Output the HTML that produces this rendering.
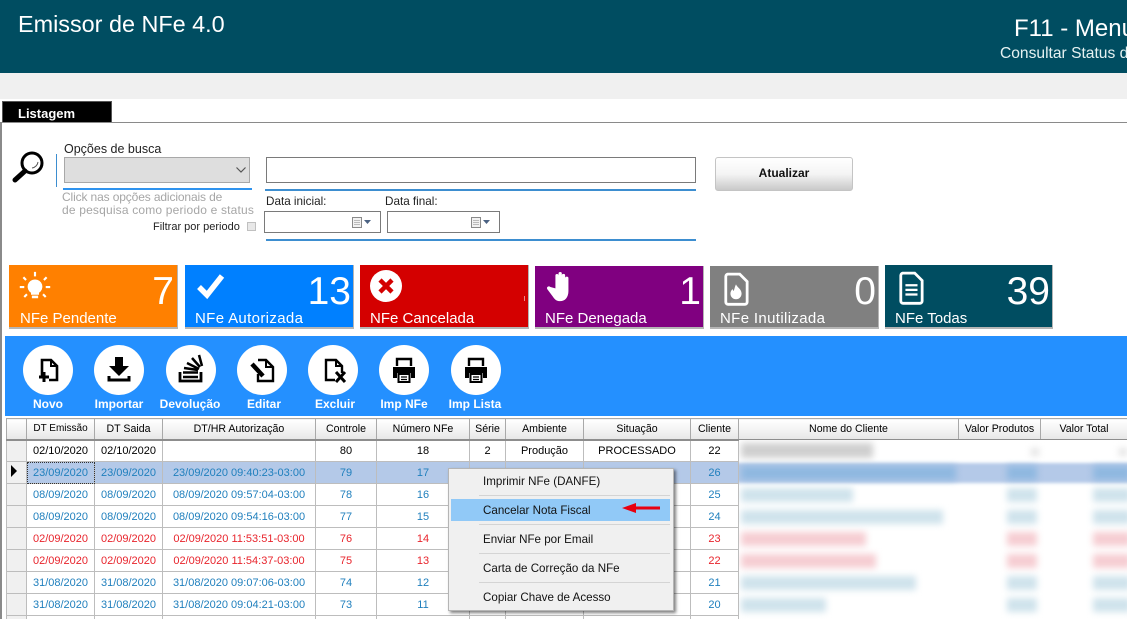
<!DOCTYPE html>
<html lang="pt"><head><meta charset="utf-8"><title>Emissor de NFe 4.0</title>
<style>
*{box-sizing:border-box}
html,body{margin:0;padding:0;background:#fff;width:1127px;height:619px;overflow:hidden}
#p{width:1127px;height:619px;overflow:hidden;position:relative;font-family:"Liberation Sans",sans-serif;color:#000;background:#fff}
.a{position:absolute;white-space:nowrap}
.t{position:absolute;white-space:nowrap;line-height:1}
.card{position:absolute;top:265px;width:169px;height:64px;color:#fff;border-bottom:2px solid #b5b5b5;border-right:1px solid #b5b5b5}
.card .n{position:absolute;right:2px;top:5px;font-size:39px;line-height:44px}
.card .l{position:absolute;left:10px;top:45px;font-size:15px;line-height:18px}
.card svg{position:absolute;left:8px;top:5px}
.circ{position:absolute;top:345px;width:50px;height:50px;border-radius:50%;background:#fff}
.circ svg{position:absolute;left:0;top:0}
.bl{position:absolute;top:398px;color:#fff;font-weight:bold;font-size:12px;line-height:13px;text-align:center;width:80px}
table{position:absolute;left:6px;top:418px;border-collapse:collapse;table-layout:fixed;width:1121px;font-size:11px}
td,th{border:1px solid #bdbdbd;height:22px;padding:0;text-align:center;font-weight:normal;overflow:hidden;white-space:nowrap}
th{height:21px;font-size:10.6px;background:linear-gradient(#fff,#f1f1f1 60%,#e6e6e6);border-color:#a9a9a9;border-bottom:2px solid #8d8d8d}
td.h{background:#f0f0f0}
tr.b td{color:#1f7fbd}
tr.r td{color:#e8242c}
tr.s td{color:#1f7fbd;background:#b4c9e8}
tr.s td.h{background:#f0f0f0;color:#000}
td.n{border-left:none;border-right:none}
.blur{position:absolute;filter:blur(3.5px)}
.m{position:absolute;left:483px;font-size:11.6px;line-height:14px;color:#111}
.sep{position:absolute;left:479px;width:191px;height:1px;background:#d4d4d4}
.line{position:absolute;background:#3d8ed0}
</style></head><body><div id="p">
<div class="a" style="left:0;top:0;width:1127px;height:73px;background:#004d61"></div>
<div class="t" style="left:18px;top:13px;font-size:23.4px;color:#fff">Emissor de NFe 4.0</div>
<div class="t" style="left:1014px;top:17px;font-size:24px;color:#fff">F11 - Menu</div>
<div class="t" style="left:1000px;top:46px;font-size:15.6px;color:#e6f2f2">Consultar Status d</div>
<div class="a" style="left:0;top:73px;width:1127px;height:26px;background:#f0f0f0"></div>

<div class="a" style="left:2px;top:101px;width:110px;height:22px;background:#000;border:1px solid #555;border-bottom:none"></div>
<div class="t" style="left:18px;top:107px;font-size:13px;font-weight:bold;color:#fff">Listagem</div>
<div class="a" style="left:0;top:122px;width:1127px;height:1px;background:#8a8a8a"></div>
<div class="a" style="left:0;top:122px;width:2px;height:497px;background:#8a8a8a"></div>

<svg class="a" style="left:12px;top:149px" width="36" height="36" viewBox="0 0 36 36"><circle cx="20" cy="14" r="10" fill="#fff" stroke="#000" stroke-width="3"/><path d="M13 22L3 31" stroke="#000" stroke-width="5" stroke-linecap="round"/><path d="M26 13a7 7 0 0 1-6 6" stroke="#555" fill="none"/></svg>
<div class="a" style="left:56px;top:154px;width:1px;height:33px;background:#3d8ed0"></div>
<div class="t" style="left:64px;top:143px;font-size:12.5px;color:#222">Opções de busca</div>
<div class="a" style="left:64px;top:157px;width:186px;height:26px;background:#dedede;border:1px solid #a8a8a8"></div>
<svg class="a" style="left:235px;top:166px" width="12" height="8"><path d="M1.5 1.5L6 6l4.500-4.500" stroke="#555" stroke-width="1.2" fill="none"/></svg>
<div class="a" style="left:63px;top:188px;width:189px;height:2px;background:#2f93ee"></div>
<div class="t" style="left:62px;top:191px;font-size:12px;letter-spacing:-.13px;color:#a6a6a6">Click nas opções adicionais de</div>
<div class="t" style="left:62px;top:204px;font-size:12px;letter-spacing:.18px;color:#a6a6a6">de pesquisa como periodo e status</div>
<div class="t" style="left:153px;top:222px;font-size:11px;color:#222">Filtrar por periodo</div>
<div class="a" style="left:247px;top:222px;width:9px;height:9px;background:#e8e8e8;border:1px solid #c0c0c0"></div>

<div class="a" style="left:266px;top:157px;width:430px;height:26px;border:1px solid #7a7a7a;background:#fff"></div>
<div class="line" style="left:265px;top:189px;width:431px;height:2px"></div>
<div class="t" style="left:266px;top:196px;font-size:11.7px;color:#222">Data inicial:</div>
<div class="t" style="left:385px;top:196px;font-size:11.7px;color:#222">Data final:</div>
<div class="a" style="left:264px;top:211px;width:117px;height:22px;border:1px solid #7a7a7a"></div>
<div class="a" style="left:387px;top:211px;width:113px;height:22px;border:1px solid #7a7a7a"></div>
<svg class="a" style="left:352px;top:217px" width="21" height="11"><rect x=".5" y=".5" width="9" height="10" fill="#f2f2f2" stroke="#8a8a8a"/><path d="M2 3.500h6M2 5.500h6M2 7.500h6" stroke="#bbb"/><path d="M12 3h7l-3.500 4z" fill="#4b6283"/></svg>
<svg class="a" style="left:471px;top:217px" width="21" height="11"><rect x=".5" y=".5" width="9" height="10" fill="#f2f2f2" stroke="#8a8a8a"/><path d="M2 3.500h6M2 5.500h6M2 7.500h6" stroke="#bbb"/><path d="M12 3h7l-3.500 4z" fill="#4b6283"/></svg>
<div class="line" style="left:266px;top:239px;width:430px;height:2px"></div>
<div class="a" style="left:715px;top:157px;width:138px;height:34px;border:1px solid #c4c4c4;border-radius:3px;background:linear-gradient(#fff,#f4f4f4 50%,#c9c9c9);text-align:center;font-size:12px;font-weight:bold;line-height:31px;color:#111">Atualizar</div>

<div class="card" style="left:9px;background:#ff8000"><svg style="left:9px;top:6px" width="34" height="34" viewBox="0 0 38 38" fill="#fff" stroke="#fff"><path d="M19 10a7.500 7.500 0 0 0-4 14v2h8v-2a7.500 7.500 0 0 0-4-14z"/><path d="M16 28h6v2h-6z"/><path d="M19 1v5M6 7l3 3M32 7l-3 3M2 18h5M31 18h5M7 29l3-3M31 29l-3-3" stroke-width="2.400" fill="none"/></svg><div class="n" style="right:3px">7</div><div class="l" style="left:11px">NFe Pendente</div></div>
<div class="card" style="left:185px;background:#0080ff"><svg width="38" height="38" viewBox="0 0 38 38"><path d="M6 17l8 8L29 6" fill="none" stroke="#fff" stroke-width="5.500"/></svg><div class="n">13</div><div class="l" style="letter-spacing:.35px">NFe Autorizada</div></div>
<div class="card" style="left:360px;background:#d40000"><svg style="left:9px;top:4px" width="34" height="34" viewBox="0 0 34 34"><circle cx="17" cy="17" r="16" fill="#fff"/><path d="M11 11l12 12M23 11L11 23" stroke="#d40000" stroke-width="4.500"/></svg><div class="a" style="left:164px;top:31px;width:1px;height:5px;background:#e88"></div><div class="l">NFe Cancelada</div></div>
<div class="card" style="left:535px;background:#800080;top:266px;height:63px"><svg style="left:11px;top:4px" width="28" height="33" viewBox="0 0 30 36" fill="#fff"><path d="M10 20V6a1.700 1.700 0 0 1 3.400 0V4a1.800 1.800 0 0 1 3.600 0v2a1.800 1.800 0 0 1 3.600 0v3a1.800 1.800 0 0 1 3.600 0v14c0 7-4 11-9 11-4 0-6-2-8-5l-6-8c-1.500-2.500 1.500-4 3.300-2.500z"/></svg><div class="n" style="top:4px">1</div><div class="l" style="top:44px">NFe Denegada</div></div>
<div class="card" style="left:710px;background:#808080;top:266px;height:63px"><svg style="left:13px;top:6px" width="26" height="34" viewBox="0 0 28 36"><path d="M5 2h13l8 8v22a2.500 2.500 0 0 1-2.500 2.500h-18A2.500 2.500 0 0 1 3 32V4.500A2.500 2.500 0 0 1 5 2z" fill="none" stroke="#fff" stroke-width="3"/><path d="M14 13c1 3 6 5 6 10a6 6 0 0 1-12 0c0-2 1-4 2.500-5 0 1 .5 2 1 2 1-2 1-4 2.500-7z" fill="#fff"/></svg><div class="n" style="top:4px">0</div><div class="l" style="top:44px;letter-spacing:.35px">NFe Inutilizada</div></div>
<div class="card" style="left:885px;background:#004d61;width:168px"><svg style="left:13px;top:6px" width="26" height="34" viewBox="0 0 28 36"><path d="M5 2h13l8 8v22a2.500 2.500 0 0 1-2.500 2.500h-18A2.500 2.500 0 0 1 3 32V4.500A2.500 2.500 0 0 1 5 2z" fill="none" stroke="#fff" stroke-width="3"/><path d="M8 15h13M8 20h13M8 25h13" stroke="#fff" stroke-width="2.400"/></svg><div class="n">39</div><div class="l">NFe Todas</div></div>

<div class="a" style="left:5px;top:336px;width:1122px;height:80px;background:#2490ff"></div>
<div class="circ" style="left:23px"><svg width="50" height="50" viewBox="0 0 50 50"><path d="M19 31V15h9l6 6v14h-8" fill="none" stroke="#000" stroke-width="2.600"/><path d="M28 15v6h6" fill="none" stroke="#000" stroke-width="2"/><path d="M21 27v10M16 32h10" stroke="#000" stroke-width="3"/></svg></div>
<div class="circ" style="left:94px"><svg width="50" height="50" viewBox="0 0 50 50"><path d="M21 12h8v9h6L25 31 15 21h6z"/><path d="M15 30v4h20v-4" transform="translate(0 1)" fill="none" stroke="#000" stroke-width="3"/></svg></div>
<div class="circ" style="left:166px"><svg width="50" height="50" viewBox="0 0 50 50"><path d="M14 27v9h21v-9" fill="none" stroke="#000" stroke-width="2.800"/><path d="M17 32h15M17 27.500h15M18 23l14 2M21 18l12 6M26 13l8 9M33 10l3 11" stroke="#000" stroke-width="2.500"/></svg></div>
<div class="circ" style="left:237px"><svg width="50" height="50" viewBox="0 0 50 50"><path d="M21 15h8l7 7v14H21v-7" fill="none" stroke="#000" stroke-width="2.400"/><path d="M29 15v7h7" fill="none" stroke="#000" stroke-width="2"/><path d="M15 19l11 12" stroke="#000" stroke-width="4.500"/></svg></div>
<div class="circ" style="left:308px"><svg width="50" height="50" viewBox="0 0 50 50"><path d="M27 35H18V15h10l6 6v7" fill="none" stroke="#000" stroke-width="2.400"/><path d="M28 15v6h6" fill="none" stroke="#000" stroke-width="2"/><path d="M28 27l9 10M37 27l-9 10" stroke="#000" stroke-width="3"/></svg></div>
<div class="circ" style="left:379px"><svg width="50" height="50" viewBox="0 0 50 50"><path d="M18 21v-7h14v7" fill="none" stroke="#000" stroke-width="2.400"/><path d="M14 22h22v11h-4v-5H18v5h-4z"/><path d="M19.500 29h11v8h-11z" fill="none" stroke="#000" stroke-width="2"/><path d="M22 32h6M22 34.500h6" stroke="#000" stroke-width="1.300"/></svg></div>
<div class="circ" style="left:451px"><svg width="50" height="50" viewBox="0 0 50 50"><path d="M18 21v-7h14v7" fill="none" stroke="#000" stroke-width="2.400"/><path d="M14 22h22v11h-4v-5H18v5h-4z"/><path d="M19.500 29h11v8h-11z" fill="none" stroke="#000" stroke-width="2"/><path d="M22 32h6M22 34.500h6" stroke="#000" stroke-width="1.300"/></svg></div>
<div class="bl" style="left:8px">Novo</div><div class="bl" style="left:79px">Importar</div><div class="bl" style="left:150px">Devolução</div><div class="bl" style="left:224px">Editar</div><div class="bl" style="left:295px">Excluir</div><div class="bl" style="left:364px">Imp NFe</div><div class="bl" style="left:435px">Imp Lista</div>

<table>
<colgroup><col style="width:20px"><col style="width:68px"><col style="width:68px"><col style="width:153px"><col style="width:61px"><col style="width:93px"><col style="width:36px"><col style="width:78px"><col style="width:107px"><col style="width:48px"><col style="width:220px"><col style="width:82px"><col style="width:87px"></colgroup>
<tr><th></th><th style="font-size:10px">DT Emissão</th><th>DT Saida</th><th>DT/HR Autorização</th><th>Controle</th><th>Número NFe</th><th>Série</th><th>Ambiente</th><th>Situação</th><th>Cliente</th><th>Nome do Cliente</th><th>Valor Produtos</th><th>Valor Total</th></tr>
<tr><td class="h"></td><td>02/10/2020</td><td>02/10/2020</td><td></td><td>80</td><td>18</td><td>2</td><td>Produção</td><td>PROCESSADO</td><td>22</td><td class="n"></td><td class="n"></td><td class="n"></td></tr>
<tr class="s"><td class="h"></td><td style="outline:1px dotted #333;outline-offset:-1px">23/09/2020</td><td>23/09/2020</td><td>23/09/2020 09:40:23-03:00</td><td>79</td><td>17</td><td></td><td></td><td></td><td>26</td><td class="n"></td><td class="n"></td><td class="n"></td></tr>
<tr class="b"><td class="h"></td><td>08/09/2020</td><td>08/09/2020</td><td>08/09/2020 09:57:04-03:00</td><td>78</td><td>16</td><td></td><td></td><td></td><td>25</td><td class="n"></td><td class="n"></td><td class="n"></td></tr>
<tr class="b"><td class="h"></td><td>08/09/2020</td><td>08/09/2020</td><td>08/09/2020 09:54:16-03:00</td><td>77</td><td>15</td><td></td><td></td><td></td><td>24</td><td class="n"></td><td class="n"></td><td class="n"></td></tr>
<tr class="r"><td class="h"></td><td>02/09/2020</td><td>02/09/2020</td><td>02/09/2020 11:53:51-03:00</td><td>76</td><td>14</td><td></td><td></td><td></td><td>23</td><td class="n"></td><td class="n"></td><td class="n"></td></tr>
<tr class="r"><td class="h"></td><td>02/09/2020</td><td>02/09/2020</td><td>02/09/2020 11:54:37-03:00</td><td>75</td><td>13</td><td></td><td></td><td></td><td>22</td><td class="n"></td><td class="n"></td><td class="n"></td></tr>
<tr class="b"><td class="h"></td><td>31/08/2020</td><td>31/08/2020</td><td>31/08/2020 09:07:06-03:00</td><td>74</td><td>12</td><td></td><td></td><td></td><td>21</td><td class="n"></td><td class="n"></td><td class="n"></td></tr>
<tr class="b"><td class="h"></td><td>31/08/2020</td><td>31/08/2020</td><td>31/08/2020 09:04:21-03:00</td><td>73</td><td>11</td><td></td><td></td><td></td><td>20</td><td class="n"></td><td class="n"></td><td class="n"></td></tr>
<tr><td class="h"></td><td></td><td></td><td></td><td></td><td></td><td></td><td></td><td></td><td></td><td class="n"></td><td class="n"></td><td class="n"></td></tr>
</table>
<svg class="a" style="left:10px;top:465px" width="8" height="12"><path d="M1 0l6 6-6 6z" fill="#000"/></svg>
<div class="a" style="left:739px;top:440px;width:388px;height:179px;overflow:hidden;background:#fff">
<div class="blur" style="left:-10px;top:23px;width:410px;height:20px;background:#b4c9e8;filter:blur(1.5px)"></div>
<div class="blur" style="left:2px;top:3px;width:132px;height:15px;background:#cfcfcf"></div><div class="blur" style="left:292px;top:8px;width:8px;height:8px;background:#e2e2e2"></div><div class="blur" style="left:380px;top:8px;width:8px;height:8px;background:#e2e2e2"></div>
<div class="blur" style="left:2px;top:26px;width:215px;height:14px;background:#8fb8e0"></div><div class="blur" style="left:268px;top:26px;width:30px;height:14px;background:#8fb8e0"></div><div class="blur" style="left:354px;top:26px;width:38px;height:14px;background:#8fb8e0"></div>
<div class="blur" style="left:2px;top:48px;width:112px;height:14px;background:#cfe3ec"></div><div class="blur" style="left:268px;top:48px;width:30px;height:14px;background:#cfe3ec"></div><div class="blur" style="left:354px;top:48px;width:38px;height:14px;background:#cfe3ec"></div>
<div class="blur" style="left:2px;top:70px;width:202px;height:14px;background:#cfe3ec"></div><div class="blur" style="left:268px;top:70px;width:30px;height:14px;background:#cfe3ec"></div><div class="blur" style="left:354px;top:70px;width:38px;height:14px;background:#cfe3ec"></div>
<div class="blur" style="left:2px;top:92px;width:125px;height:14px;background:#f6cdd2"></div><div class="blur" style="left:268px;top:92px;width:30px;height:14px;background:#f6cdd2"></div><div class="blur" style="left:354px;top:92px;width:38px;height:14px;background:#f6cdd2"></div>
<div class="blur" style="left:2px;top:114px;width:135px;height:14px;background:#f6cdd2"></div><div class="blur" style="left:268px;top:114px;width:30px;height:14px;background:#f6cdd2"></div><div class="blur" style="left:354px;top:114px;width:38px;height:14px;background:#f6cdd2"></div>
<div class="blur" style="left:2px;top:136px;width:175px;height:14px;background:#cfe3ec"></div><div class="blur" style="left:268px;top:136px;width:30px;height:14px;background:#cfe3ec"></div><div class="blur" style="left:354px;top:136px;width:38px;height:14px;background:#cfe3ec"></div>
<div class="blur" style="left:2px;top:158px;width:85px;height:14px;background:#cfe3ec"></div><div class="blur" style="left:268px;top:158px;width:30px;height:14px;background:#cfe3ec"></div><div class="blur" style="left:354px;top:158px;width:38px;height:14px;background:#cfe3ec"></div>
</div>

<div class="a" style="left:448px;top:468px;width:226px;height:143px;background:#f0f0f0;border:1px solid #b5b5b5;box-shadow:2px 2px 3px rgba(0,0,0,.5)"></div>
<div class="a" style="left:451px;top:499px;width:219px;height:22px;background:#91c9f7"></div>
<div class="m" style="top:475px">Imprimir NFe (DANFE)</div><div class="sep" style="top:495px"></div>
<div class="m" style="top:504px">Cancelar Nota Fiscal</div><div class="sep" style="top:524px"></div>
<div class="m" style="top:533px">Enviar NFe por Email</div><div class="sep" style="top:553px"></div>
<div class="m" style="top:562px">Carta de Correção da NFe</div><div class="sep" style="top:582px"></div>
<div class="m" style="top:591px">Copiar Chave de Acesso</div>
<svg class="a" style="left:620px;top:502px" width="42" height="12"><path d="M2 6l14-5v3.500h24v3H16V11z" fill="#e8000f"/></svg>
</div></body></html>
